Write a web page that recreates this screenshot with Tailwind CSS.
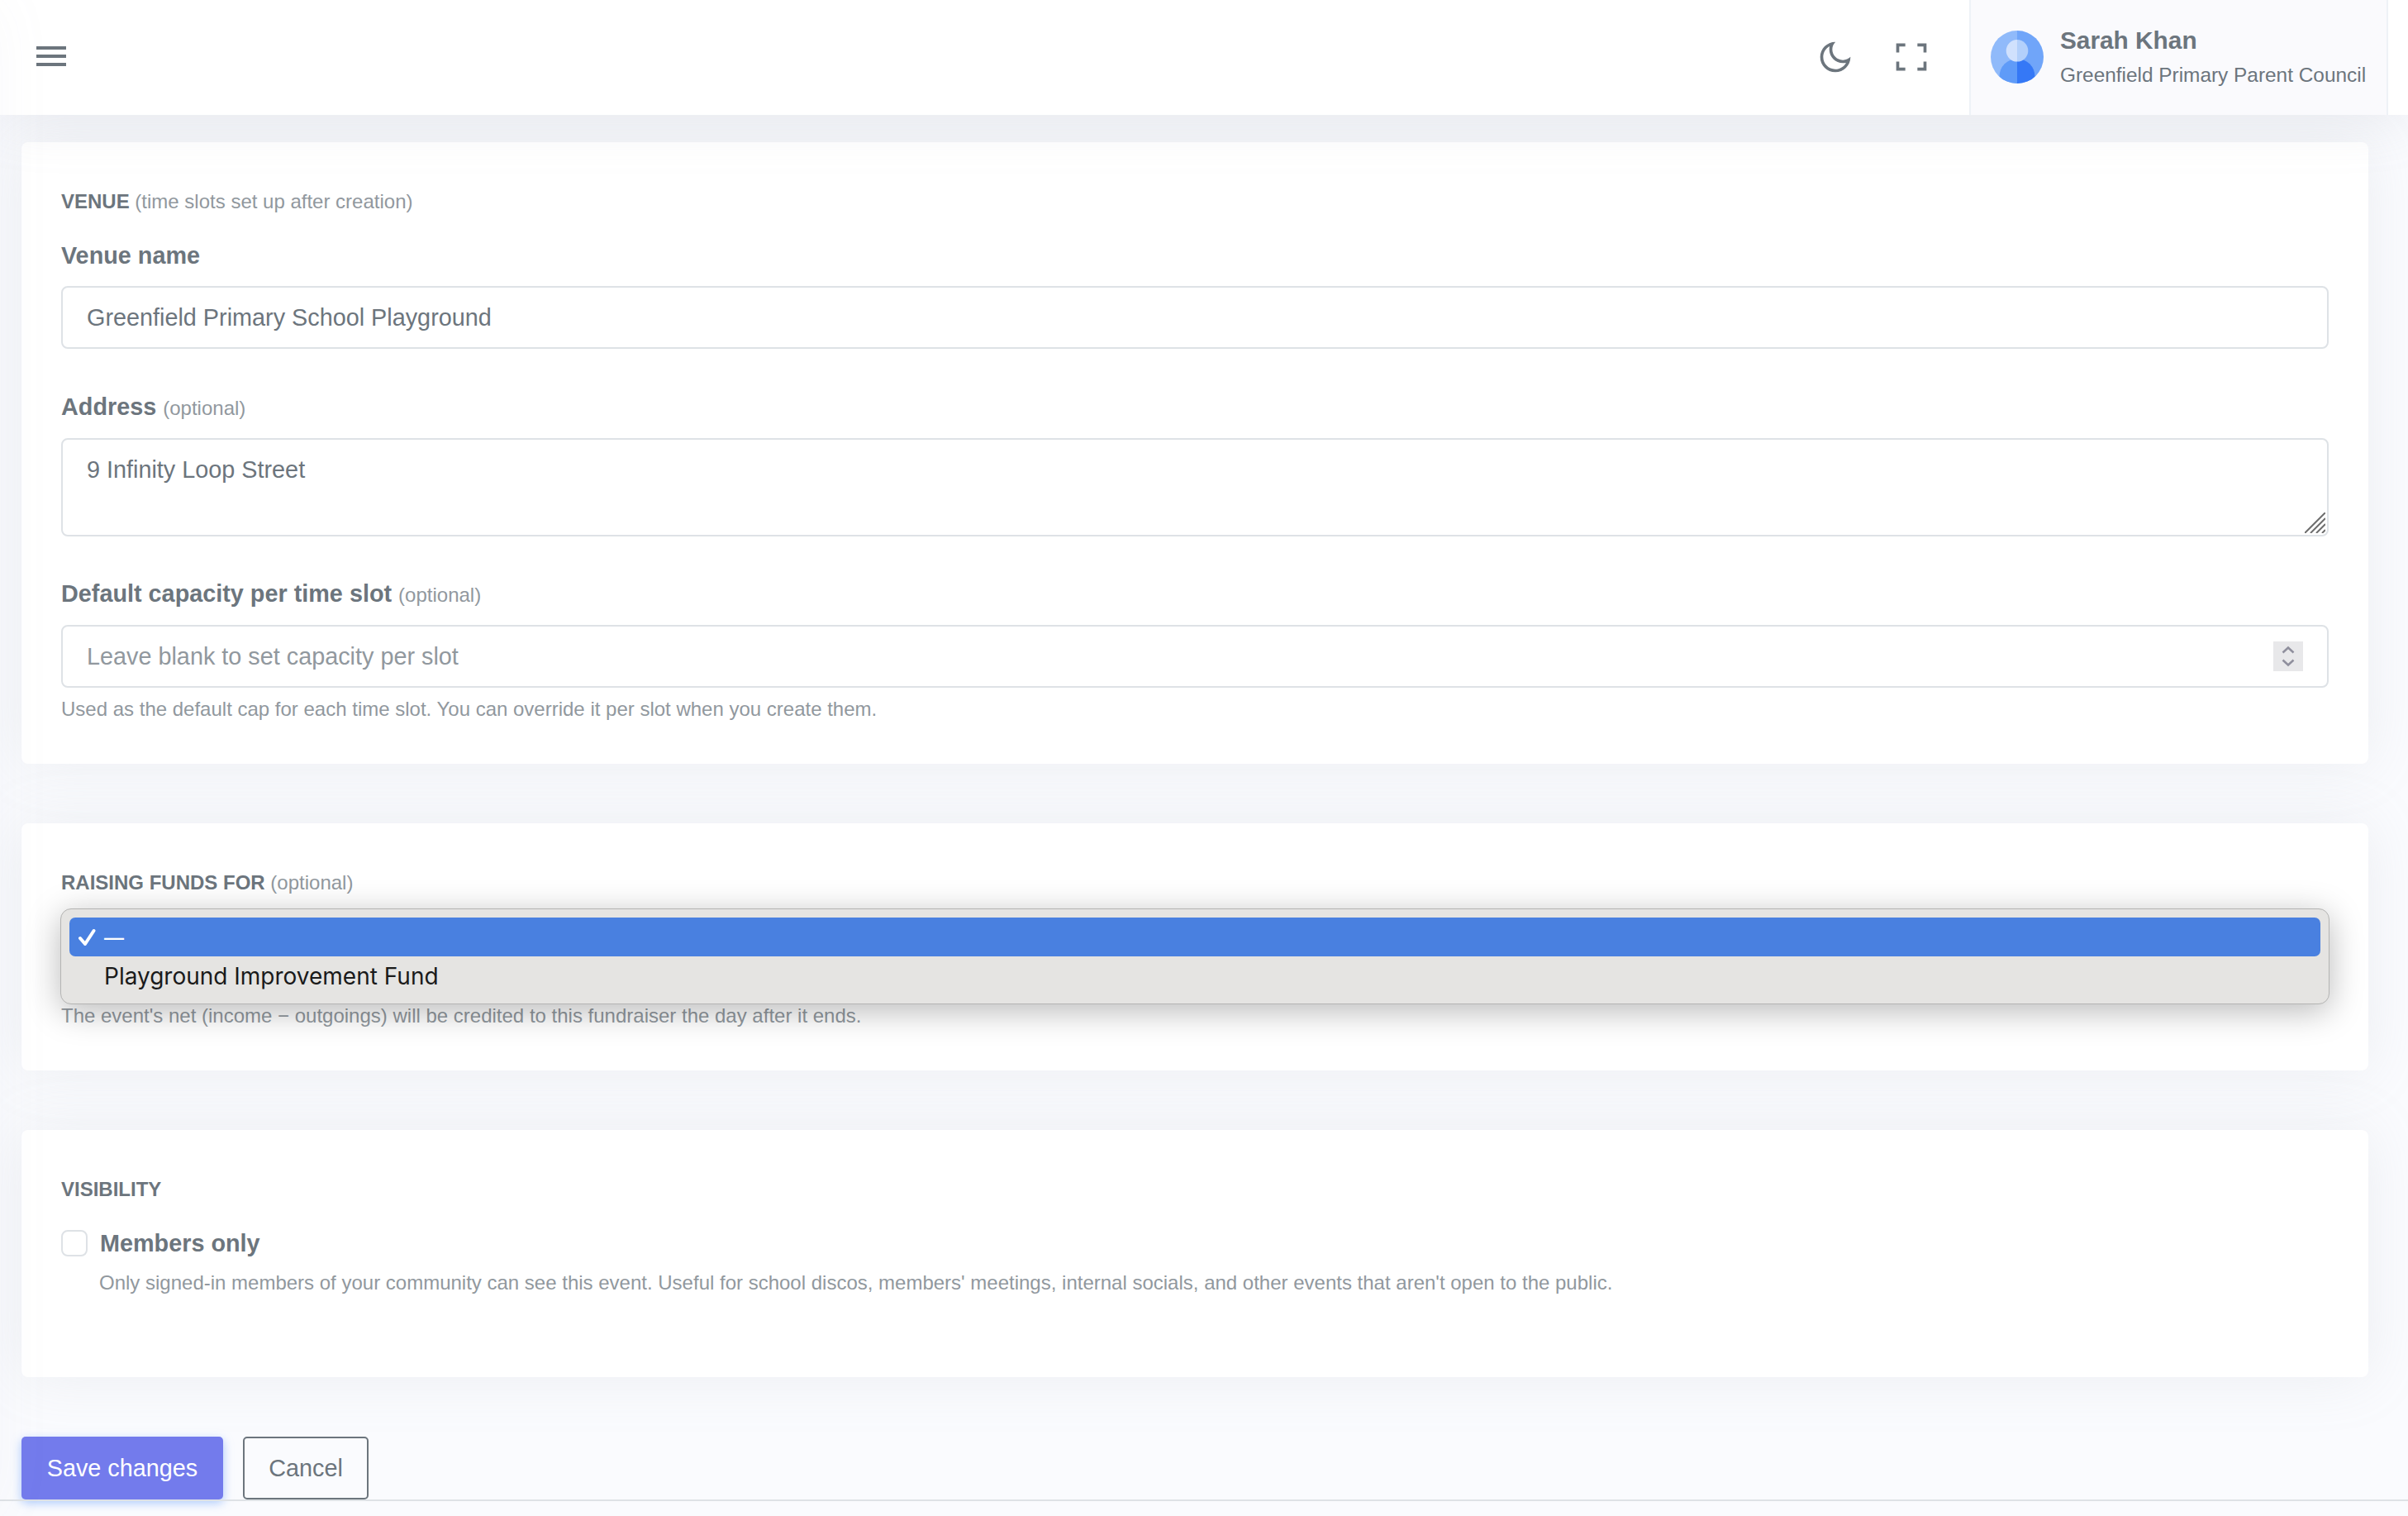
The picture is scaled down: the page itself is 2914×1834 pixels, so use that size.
<!DOCTYPE html>
<html lang="en">
<head>
    <meta charset="utf-8">
    <title>Edit event</title>
    <script src="https://cdn.jsdelivr.net/npm/@tailwindcss/browser@4"></script>
</head>
<body class="relative w-[2914px] h-[1834px] overflow-hidden bg-[#fafbfe] font-['Liberation_Sans',Arial,sans-serif] text-[28.8px] leading-[43px] text-[#6c757d]">

    <!-- Collapsed sidebar, only its shadow reaches the page -->
    <nav class="absolute z-20 top-0 -left-[520px] w-[520px] h-[1834px] shadow-[0_0_70px_0_rgba(154,161,171,0.05)]"></nav>

    <!-- Topbar -->
    <header class="relative z-10 flex items-center h-[139px] bg-white shadow-[0_0_70px_0_rgba(154,161,171,0.22)]">
        <button type="button" class="ml-[44px] mt-[-3px]">
            <svg width="36" height="24" viewBox="0 0 36 24" fill="#6c757d">
                <rect width="36" height="4"/>
                <rect y="10" width="36" height="4"/>
                <rect y="20" width="36" height="4"/>
            </svg>
        </button>
        <div class="ml-auto mr-[24px] flex items-center h-full">
            <svg class="mr-[48px] -mt-[2px]" width="44" height="44" viewBox="0 0 24 24" fill="#6c757d">
                <path d="M10 7C10 10.866 13.134 14 17 14C18.9584 14 20.729 13.1957 21.9995 11.8995C22 11.933 22 11.9665 22 12C22 17.5228 17.5228 22 12 22C6.47715 22 2 17.5228 2 12C2 6.47715 6.47715 2 12 2C12.0335 2 12.067 2 12.1005 2.00049C10.8043 3.27098 10 5.04157 10 7ZM4 12C4 16.4183 7.58172 20 12 20C15.0583 20 17.7158 18.2839 19.062 15.7621C18.3945 15.9187 17.7035 16 17 16C12.0294 16 8 11.9706 8 7C8 6.29648 8.08133 5.60547 8.2379 4.938C5.71611 6.28423 4 8.9417 4 12Z"/>
            </svg>
            <svg class="mr-[48px] -mt-[2px]" width="44" height="44" viewBox="0 0 24 24" fill="#6c757d">
                <path d="M8 3V5H4V9H2V3H8ZM2 21V15H4V19H8V21H2ZM22 21H16V19H20V15H22V21ZM22 9H20V5H16V3H22V9Z"/>
            </svg>
            <div class="flex items-center h-full w-[507px] pl-[24px] border-x-2 border-[#eef2f7] bg-[#fafafd]">
                <svg class="-mt-px shrink-0" width="64" height="64" viewBox="0 0 64 64">
                    <clipPath id="avatar"><circle cx="32" cy="32" r="32"/></clipPath>
                    <g clip-path="url(#avatar)">
                        <rect width="32" height="64" fill="#90bafa"/>
                        <rect x="32" width="32" height="64" fill="#70a5f9"/>
                        <path d="M32 34A21.500 21.500 0 0 0 32 77Z" fill="#5f9bf8"/>
                        <path d="M32 34A21.500 21.500 0 0 1 32 77Z" fill="#3578f6"/>
                        <path d="M32 11A13.300 13.300 0 0 0 32 37.600Z" fill="#d0e1fd"/>
                        <path d="M32 11A13.300 13.300 0 0 1 32 37.600Z" fill="#b3d0fb"/>
                    </g>
                </svg>
                <div class="ml-[20px] whitespace-nowrap">
                    <div class="text-[29.8px] font-bold leading-[42px]">Sarah Khan</div>
                    <div class="text-[24.4px] leading-[42px]">Greenfield Primary Parent Council</div>
                </div>
            </div>
        </div>
    </header>

    <main class="mt-[33px] mx-[26px]">
        <form class="w-[2840px]">
            <!-- Venue -->
            <section class="h-[752px] mb-[72px] px-[48px] pt-[52px] rounded-[8px] bg-white shadow-[0_0_70px_0_rgba(154,161,171,0.15)]">
                <h6 class="text-[24px] leading-[40px]"><b>VENUE</b> <span class="text-[#91989e]">(time slots set up after creation)</span></h6>
                <label class="block h-[43px] mt-[24px] font-bold">Venue name</label>
                <input type="text" value="Greenfield Primary School Playground" class="block mt-[15px] w-full h-[76px] px-[29px] rounded-[8px] border-2 border-[#dee2e6]">

                <label class="block h-[43px] mt-[49px]"><b>Address</b> <small class="text-[24px] text-[#91989e]">(optional)</small></label>
                <div class="relative mt-[16px]">
                    <textarea class="block w-full h-[119px] px-[29px] py-[15px] resize-none rounded-[8px] border-2 border-[#dee2e6]">9 Infinity Loop Street</textarea>
                    <svg class="absolute right-[4px] bottom-[4px]" width="25" height="25" viewBox="0 0 25 25" stroke="#6e6e6e" stroke-width="2">
                        <path d="M0 25L25 0M7 25L25 7M14 25L25 14M21 25L25 21"/>
                    </svg>
                </div>

                <label class="block h-[43px] mt-[48px]"><b>Default capacity per time slot</b> <small class="text-[24px] text-[#91989e]">(optional)</small></label>
                <div class="flex items-center mt-[16px] h-[76px] pl-[29px] pr-[29px] rounded-[8px] border-2 border-[#dee2e6]">
                    <input type="text" placeholder="Leave blank to set capacity per slot" class="grow placeholder:text-[#91989e]">
                    <svg class="bg-[#e8e8ea]" width="36" height="36" viewBox="0 0 36 36" fill="none" stroke="#8f8f9d" stroke-width="2.5">
                        <path d="M11.500 13.500L18 7.500L24.500 13.500M11.500 22.500L18 28.500L24.500 22.500"/>
                    </svg>
                </div>
                <p class="mt-[6px] text-[24px] leading-[40px] text-[#91989e]">Used as the default cap for each time slot. You can override it per slot when you create them.</p>
            </section>

            <!-- Fundraiser -->
            <section class="h-[299px] mb-[72px] px-[48px] pt-[52px] rounded-[8px] bg-white shadow-[0_0_70px_0_rgba(154,161,171,0.15)]">
                <h6 class="text-[24px] leading-[40px]"><b>RAISING FUNDS FOR</b> <span class="text-[#91989e]">(optional)</span></h6>
                <div class="relative h-[121px]">
                    <ul class="absolute top-[11px] -inset-x-px h-[116px] px-[10px] py-[10px] rounded-[13px] border border-[#b4b4b3] bg-[#e5e4e2] shadow-[0_8px_40px_0_rgba(0,0,0,0.28)] font-[Inter,sans-serif] text-[28px] text-[#1a1a1a]">
                        <li class="flex items-center h-[47px] pl-[11px] rounded-[7px] bg-[#4980e0] text-white">
                            <svg width="21" height="21" viewBox="0 0 21 21" fill="none" stroke="currentColor" stroke-width="4" stroke-linecap="round" stroke-linejoin="round">
                                <path d="M2 12L8 19L18.500 3"/>
                            </svg>
                            <span class="ml-[10px] mt-[2px] text-[24px] font-medium">—</span>
                        </li>
                        <li class="flex items-center h-[49px] pl-[42px]">Playground Improvement Fund</li>
                    </ul>
                </div>
                <p class="text-[24px] leading-[40px] text-[#91989e]">The event's net (income − outgoings) will be credited to this fundraiser the day after it ends.</p>
            </section>

            <!-- Visibility -->
            <section class="h-[299px] mb-[72px] px-[48px] pt-[52px] rounded-[8px] bg-white shadow-[0_0_70px_0_rgba(154,161,171,0.15)]">
                <h6 class="text-[24px] leading-[40px] font-bold">VISIBILITY</h6>
                <label class="flex items-center h-[43px] mt-[24px] font-bold">
                    <input type="checkbox" class="appearance-none -mt-[2px] mr-[15px] w-[32px] h-[32px] rounded-[8px] border-2 border-[#dee2e6]">
                    Members only
                </label>
                <p class="mt-[6px] ml-[46px] text-[24px] leading-[40px] text-[#91989e]">Only signed-in members of your community can see this event. Useful for school discos, members' meetings, internal socials, and other events that aren't open to the public.</p>
            </section>

            <div class="flex gap-[24px]">
                <button type="submit" class="w-[244px] h-[76px] rounded-[5px] bg-[#737bec] text-white shadow-[0_4px_12px_0_rgba(114,165,250,0.6)]">Save changes</button>
                <button type="button" class="w-[152px] h-[76px] rounded-[5px] border-2 border-[#6c757d]">Cancel</button>
            </div>
        </form>
    </main>

    <footer class="relative h-[20px] border-t-2 border-[#dee2e6]"></footer>
</body>
</html>
